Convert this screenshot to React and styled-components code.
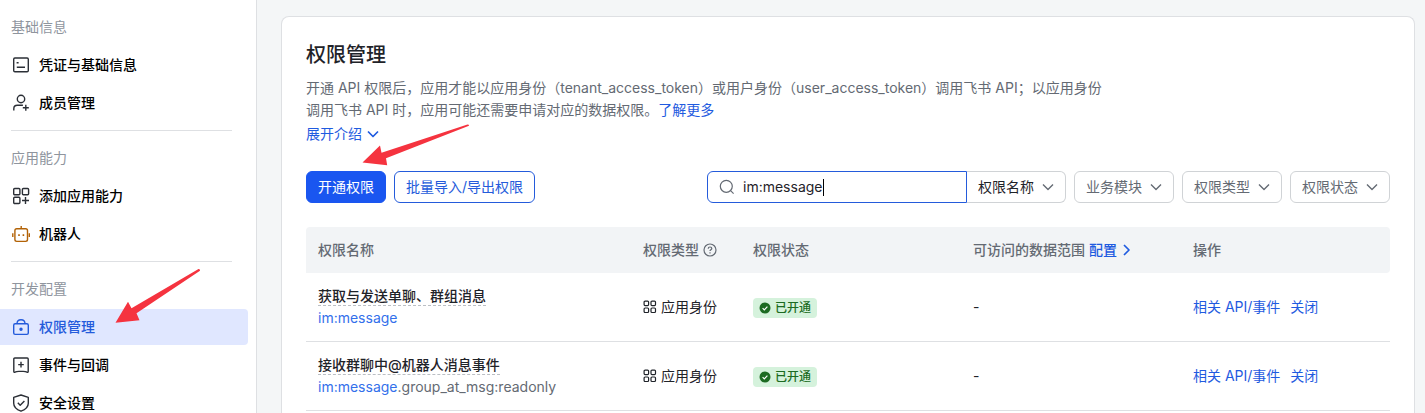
import React, {useState} from 'react'
import styled, {createGlobalStyle} from 'styled-components'

const GlobalStyle = createGlobalStyle`
    * {
        box-sizing: border-box;
    }
    body {
        margin: 0;
        color: #1f2329;
        font-family: Inter, 'Noto Sans CJK SC', sans-serif;
        font-size: 14px;
        line-height: 22px;
    }
    button, input, select {
        font: inherit;
        color: inherit;
    }
    a {
        color: #1f5be0;
        text-decoration: none;
    }
`

const Layout = styled.div`
    position: relative;
    display: flex;
    height: 100vh;
    overflow: hidden;
    background: #f4f6f7;
`

const Sidebar = styled.nav`
    flex: 0 0 257px;
    overflow: hidden;
    padding-top: 17px;
    background: #fff;
    border-right: 1px solid #dee0e3;
`

const Group = styled.section`
    & + & {
        margin-top: 9px;
    }
    & + &::before {
        content: '';
        display: block;
        margin: 0 24px 17px 11px;
        border-top: 1px solid #dee0e3;
    }
`

const GroupTitle = styled.h2`
    margin: 0 0 10px;
    padding-left: 11px;
    color: #8f959e;
    font-size: 14px;
    font-weight: 400;
    line-height: 20px;
`

const Menu = styled.ul`
    display: flex;
    flex-direction: column;
    gap: 2px;
    margin: 0;
    padding: 0 8px 0 0;
    list-style: none;
`

const MenuLink = styled.a`
    display: flex;
    align-items: center;
    gap: 9px;
    height: 36px;
    padding-left: 12px;
    border-radius: 0 4px 4px 0;
    background: ${props=>(props.$active ? '#e0e7ff' : 'transparent')};
    color: ${props=>(props.$active ? '#245bdb' : '#000')};
    font-weight: 500;
    svg {
        color: ${props=>props.$tint || (props.$active ? '#245bdb' : '#2b2f36')};
    }
`

const Main = styled.main`
    display: flex;
    flex: 1;
    min-width: 0;
    padding: 16px 10px 0 24px;
`

const Card = styled.div`
    flex: 1;
    min-width: 0;
    padding: 24px 24px 0;
    border: 1px solid #dee0e3;
    border-bottom: 0;
    border-radius: 8px 8px 0 0;
    background: #fff;
`

const Title = styled.h1`
    margin: 0 0 8px;
    font-size: 20px;
    font-weight: 500;
    line-height: 28px;
`

const Intro = styled.p`
    max-width: 800px;
    margin: 0 0 2px;
    color: #646a73;
`

const Expand = styled.button`
    display: flex;
    align-items: center;
    gap: 5px;
    padding: 0;
    border: 0;
    background: none;
    color: #1f5be0;
`

const Toolbar = styled.div`
    display: flex;
    gap: 8px;
    margin: 26px 0 24px;
`

const Button = styled.button`
    height: 32px;
    padding: 0 11px;
    border: 1px solid ${props=>(props.$primary ? '#1a56f0' : '#245bdb')};
    border-radius: 6px;
    background: ${props=>(props.$primary ? '#1a56f0' : '#fff')};
    color: ${props=>(props.$primary ? '#fff' : '#245bdb')};
`

const Filters = styled.div`
    display: flex;
    gap: 8px;
    margin-left: auto;
`

const SearchGroup = styled.div`
    display: flex;
`

const SearchBox = styled.label`
    display: flex;
    align-items: center;
    width: 260px;
    height: 32px;
    padding: 0 11px;
    border: 1px solid #245bdb;
    border-radius: 6px 0 0 6px;
    color: #646a73;
`

const SearchInput = styled.input`
    field-sizing: content;
    min-width: 8px;
    margin-left: 8px;
    padding: 0;
    border: 0;
    outline: 0;
    background: none;
    color: #1f2329;
    caret-color: transparent;
`

const Caret = styled.span`
    width: 1px;
    height: 17px;
    background: #000;
`

const SelectBox = styled.span`
    display: grid;
    align-items: center;
    width: ${props=>(props.$joined ? '99px' : '100px')};
    color: ${props=>(props.$joined ? '#1f2329' : '#646a73')};
    select, svg {
        grid-area: 1 / 1;
    }
    svg {
        justify-self: end;
        margin-right: 12px;
        color: #646a73;
        pointer-events: none;
    }
`

const Select = styled.select`
    appearance: none;
    width: 100%;
    height: 32px;
    padding: 0 11px;
    border: 1px solid #d0d3d6;
    border-left-width: ${props=>(props.$joined ? '0' : '1px')};
    border-radius: ${props=>(props.$joined ? '0 6px 6px 0' : '6px')};
    background: #fff;
`

const Table = styled.table`
    width: 100%;
    border-collapse: separate;
    border-spacing: 0;
    table-layout: fixed;
    th {
        padding: 12px;
        background: #f2f4f6;
        color: #646a73;
        font-weight: 500;
        text-align: left;
    }
    th:first-child {
        border-radius: 4px 0 0 0;
    }
    th:last-child {
        border-radius: 0 4px 4px 0;
    }
    td {
        padding: 12px;
        border-bottom: 1px solid #dee0e3;
    }
`

const Col = styled.col`
    width: ${props=>props.$width};
`

const Inline = styled.span`
    display: flex;
    align-items: center;
    gap: 4px;
`

const ScopeName = styled.div`
    font-weight: 500;
    line-height: 22px;
    span {
        display: inline-block;
        height: 20px;
        line-height: 20px;
        border-bottom: 1px dashed #bbbfc4;
    }
`

const ScopeCode = styled.div`
    color: #646a73;
    em {
        color: #3370eb;
        font-style: normal;
    }
`

const Tag = styled.span`
    display: inline-flex;
    align-items: center;
    gap: 4px;
    height: 20px;
    padding: 0 6px;
    border-radius: 4px;
    background: #d5f2dc;
    color: #1c6b22;
    font-size: 12px;
    font-weight: 500;
    line-height: 20px;
    vertical-align: middle;
`

const Actions = styled.div`
    display: flex;
    gap: 10px;
`

const Arrows = styled.svg`
    position: absolute;
    top: 0;
    left: 0;
    pointer-events: none;
`

const Icon = ({size = 18, children}) => (
    <svg width={size} height={size} viewBox={`0 0 ${size} ${size}`} fill="none" stroke="currentColor" strokeWidth="1.4" strokeLinejoin="round" aria-hidden="true">
        {children}
    </svg>
)

const icons = {
    credential: <Icon><rect x="1.7" y="2" width="14.6" height="13.8" rx="1.2" /><path d="M4.6 6.8h2M4.8 11.2h8.2" /></Icon>,
    member: <Icon><circle cx="9" cy="5" r="3.7" /><path d="M1.8 16.6v-1.8c0-2.100 1.400-3.500 3.500-3.500h5.600M13.800 10.800v6M10.800 13.800h6" /></Icon>,
    add: <Icon><rect x="1.7" y="1.500" width="6.200" height="6.200" rx="1" /><rect x="10.400" y="1.500" width="6.200" height="6.200" rx="1" /><rect x="1.700" y="10.300" width="6.200" height="6.200" rx="1" /><path d="M13.500 10v7M10 13.500h7" /></Icon>,
    bot: <Icon><rect x="2.900" y="3.800" width="12.600" height="12.600" rx="1.800" /><path d="M9.200 1v2.800M.8 8.300v3.600M17.300 8.300v3.600" /><path d="M7 9.200v1.800M11.400 9.200v1.800" strokeWidth="1.600" /></Icon>,
    lock: <Icon><rect x="1.7" y="5.800" width="14.6" height="10.600" rx="1.4" /><path d="M5 5.800c0-2.500 1.600-4 4-4s4 1.500 4 4" /><circle cx="9" cy="11.2" r="1" fill="currentColor" /></Icon>,
    event: <Icon><path d="M1.800 15.500V3c0-.6.4-1 1-1h12.400c.6 0 1 .4 1 1v12.500c0 .8-.6 1-1.200.7-2-1.200-3-.8-6-.8s-4-.4-6 .8c-.6.3-1.200.1-1.200-.7z" /><path d="M9 5.800v5.600M6.200 8.600h5.600" /></Icon>,
    shield: <Icon><path d="M9 1l7.300 2.400v5.800c0 3.800-2.900 6.300-7.300 8-4.400-1.700-7.300-4.200-7.300-8V3.400z" /><path d="M5.800 8.800l2.400 2.400 4.200-4.200" /></Icon>,
}

const ChevronDown = ({weight = 1.4}) => <Icon size={12}><path d="M1 3.500l5 5 5-5" strokeWidth={weight} /></Icon>

const groups = [
    {title: '基础信息', items: [
        {icon: 'credential', text: '凭证与基础信息'},
        {icon: 'member', text: '成员管理'},
    ]},
    {title: '应用能力', items: [
        {icon: 'add', text: '添加应用能力'},
        {icon: 'bot', text: '机器人', tint: '#b26206'},
    ]},
    {title: '开发配置', items: [
        {icon: 'lock', text: '权限管理', active: true},
        {icon: 'event', text: '事件与回调'},
        {icon: 'shield', text: '安全设置'},
    ]},
]

const scopes = [
    {name: '获取与发送单聊、群组消息', rest: ''},
    {name: '接收群聊中@机器人消息事件', rest: '.group_at_msg:readonly'},
]

const Dropdown = ({label, joined}) => (
    <SelectBox $joined={joined}>
        <Select $joined={joined} aria-label={label}>
            <option>{label}</option>
        </Select>
        <ChevronDown />
    </SelectBox>
)

const SideMenu = () => (
    <Sidebar>
        {groups.map(group => (
            <Group key={group.title}>
                <GroupTitle>{group.title}</GroupTitle>
                <Menu>
                    {group.items.map(item => (
                        <li key={item.text}>
                            <MenuLink href="#" $active={item.active} $tint={item.tint}>
                                {icons[item.icon]}
                                {item.text}
                            </MenuLink>
                        </li>
                    ))}
                </Menu>
            </Group>
        ))}
    </Sidebar>
)

const ScopeRow = ({name, rest}) => (
    <tr>
        <td>
            <ScopeName><span>{name}</span></ScopeName>
            <ScopeCode><em>im:message</em>{rest}</ScopeCode>
        </td>
        <td>
            <Inline>
                <Icon size={14}>
                    <g strokeWidth="1.2">
                        <rect x="1.100" y="1.100" width="4.500" height="4.500" rx="1" />
                        <rect x="8" y="1.100" width="4.500" height="4.500" rx="1" />
                        <rect x="1.100" y="8" width="4.500" height="4.500" rx="1" />
                        <rect x="8" y="8" width="4.500" height="4.500" rx="1" />
                    </g>
                </Icon>
                应用身份
            </Inline>
        </td>
        <td>
            <Tag>
                <svg width="12" height="12" viewBox="0 0 12 12" fill="none" aria-hidden="true">
                    <circle cx="6" cy="6" r="5.500" fill="#1c6b22" />
                    <path d="M3.600 6.100l1.700 1.700 3.100-3.200" stroke="#fff" strokeWidth="1.200" />
                </svg>
                已开通
            </Tag>
        </td>
        <td>-</td>
        <td>
            <Actions>
                <a href="#">相关 API/事件</a>
                <a href="#">关闭</a>
            </Actions>
        </td>
    </tr>
)

const App = () => {
    const [query,setQuery] = useState('im:message')

    return(
        <>
        <GlobalStyle />
        <Layout>
            <SideMenu />
            <Main>
                <Card>
                    <Title>权限管理</Title>
                    <Intro>
                        开通 API 权限后，应用才能以应用身份（tenant_access_token）或用户身份（user_access_token）调用飞书 API；以应用身份调用飞书 API 时，应用可能还需要申请对应的数据权限。<a href="#">了解更多</a>
                    </Intro>
                    <Expand>展开介绍 <ChevronDown weight={1.7} /></Expand>
                    <Toolbar>
                        <Button $primary>开通权限</Button>
                        <Button>批量导入/导出权限</Button>
                        <Filters>
                            <SearchGroup>
                                <SearchBox>
                                    <Icon size={16}>
                                        <g strokeWidth="1.2">
                                            <circle cx="7.300" cy="7.300" r="6" />
                                            <path d="M11.600 11.600l3 3" />
                                        </g>
                                    </Icon>
                                    <SearchInput aria-label="权限名称" value={query} onChange={event => setQuery(event.target.value)} />
                                    <Caret />
                                </SearchBox>
                                <Dropdown label="权限名称" joined />
                            </SearchGroup>
                            <Dropdown label="业务模块" />
                            <Dropdown label="权限类型" />
                            <Dropdown label="权限状态" />
                        </Filters>
                    </Toolbar>
                    <Table>
                        <colgroup>
                            <Col />
                            <Col $width="110px" />
                            <Col $width="220px" />
                            <Col $width="220px" />
                            <Col $width="209px" />
                        </colgroup>
                        <thead>
                            <tr>
                                <th>权限名称</th>
                                <th>
                                    <Inline>
                                        权限类型
                                        <Icon size={14}>
                                            <circle cx="7" cy="7" r="6" strokeWidth="1.2" />
                                            <path d="M5.200 5.800c0-1.100.8-1.800 1.800-1.800s1.800.7 1.800 1.600c0 1.200-1.800 1.300-1.800 2.500M7 9.200v1.200" strokeWidth="1.2" />
                                        </Icon>
                                    </Inline>
                                </th>
                                <th>权限状态</th>
                                <th>
                                    <Inline>
                                        可访问的数据范围
                                        <a href="#"><Inline>配置 <Icon size={12}><path d="M3 1l5 5-5 5" strokeWidth="1.7" /></Icon></Inline></a>
                                    </Inline>
                                </th>
                                <th>操作</th>
                            </tr>
                        </thead>
                        <tbody>
                            {scopes.map(scope => <ScopeRow key={scope.name} {...scope} />)}
                        </tbody>
                    </Table>
                </Card>
            </Main>
            <Arrows width="500" height="340" viewBox="0 0 500 340" fill="#f5333f" aria-hidden="true">
                <path d="M115.500 322.800L128 301.700l3.500 6.600L198.500 269q1.800-.2 1.500 1.700L136.500 313.300l3 7z" />
                <path d="M362.500 162.500L380 145.500l1.500 7.200L467.500 124.600q1.800 0 1.500 1.200L386 158.200l1.200 7z" />
            </Arrows>
        </Layout>
        </>
    );
}

export default App
